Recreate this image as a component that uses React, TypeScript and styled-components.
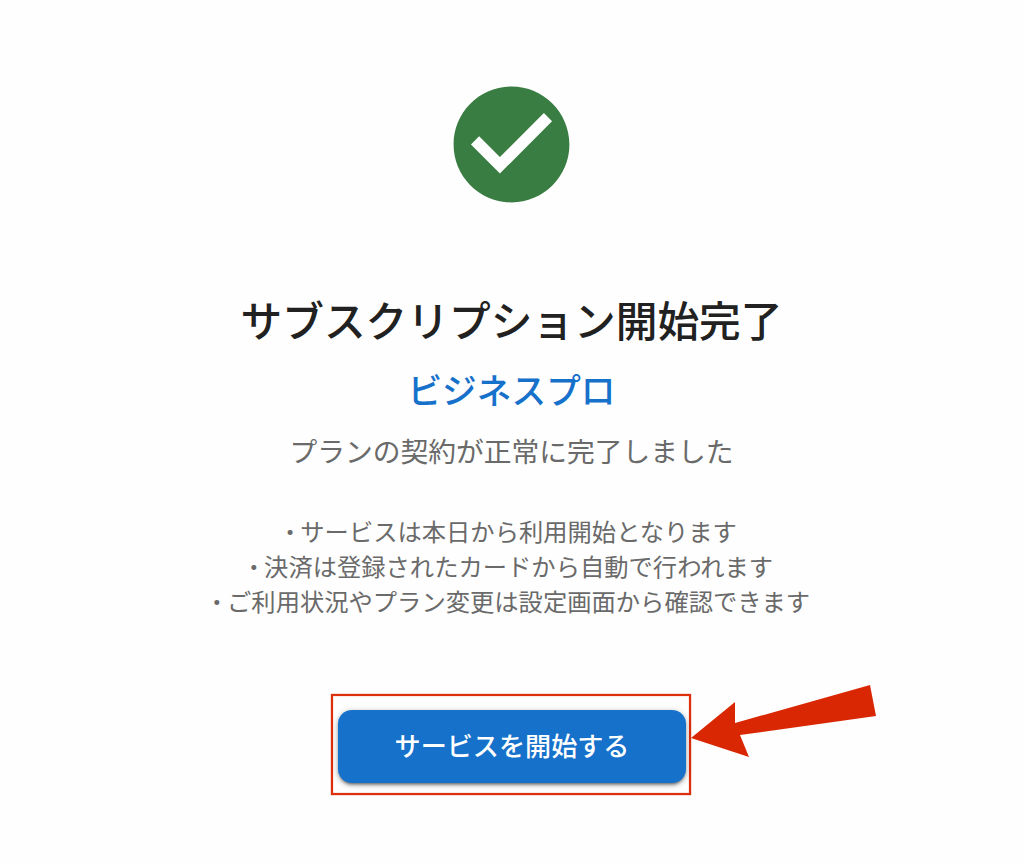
import styled, { createGlobalStyle } from 'styled-components'

const GlobalStyle = createGlobalStyle`
  * {
    box-sizing: border-box;
  }

  body {
    margin: 0;
    background-color: #fefefe;
    font-family: Roboto, 'Noto Sans CJK JP', sans-serif;
  }
`

const Container = styled.main`
  display: flex;
  flex-direction: column;
  align-items: center;
  min-height: 865px;
  padding-top: 75px;
  padding-right: 1px;
  text-align: center;
`

const CheckIcon = styled.svg`
  width: 139px;
  height: 139px;
  fill: #397d43;
`

const Title = styled.h1`
  margin: 81px 0 0;
  font-size: 41.7px;
  font-weight: 500;
  line-height: 56px;
  color: #212121;
`

const PlanName = styled.h2`
  margin: 13px 0 0;
  font-size: 34.7px;
  font-weight: 500;
  line-height: 56px;
  color: #1671cb;
`

const Message = styled.p`
  margin: 12px 0 0;
  font-size: 27.75px;
  line-height: 42px;
  color: #6a6a6a;
`

const Notes = styled.ul`
  margin: 42px 0 0;
  padding: 0;
  list-style: none;
  font-size: 24.3px;
  line-height: 34.8px;
  color: #6a6a6a;
`

const Highlight = styled.div`
  position: relative;
  width: 360px;
  height: 101px;
  margin-top: 74px;
  margin-right: 1px;
  padding: 14px 3px 0 5px;
  border: 2px solid #dc2f0c;
  box-shadow: 0 0 1px #dc2f0c, inset 0 0 1px #dc2f0c;
`

const StartBtn = styled.button`
  display: block;
  width: 348px;
  height: 73px;
  padding: 0 0 4px;
  border: none;
  border-radius: 14px;
  background-color: #1671cb;
  box-shadow: 0 3px 3px -2px rgba(0, 0, 0, 0.4), 0 2px 4px rgba(0, 0, 0, 0.3),
    0 1px 9px rgba(0, 0, 0, 0.12);
  font-family: inherit;
  font-size: 26.1px;
  font-weight: 500;
  color: #fff;
`

const Arrow = styled.svg`
  position: absolute;
  top: -12px;
  left: 357px;
  width: 188px;
  height: 76px;
  fill: #da2703;
`

const notes = [
  'サービスは本日から利用開始となります',
  '決済は登録されたカードから自動で行われます',
  'ご利用状況やプラン変更は設定画面から確認できます',
]

function App() {
  return (
    <>
      <GlobalStyle />
      <Container>
        <CheckIcon viewBox="0 0 24 24">
          <path d="M12 2C6.48 2 2 6.48 2 12s4.48 10 10 10 10-4.48 10-10S17.52 2 12 2zm-2 15l-5-5 1.41-1.41L10 14.17l7.59-7.59L19 8l-9 9z" />
        </CheckIcon>
        <Title>サブスクリプション開始完了</Title>
        <PlanName>ビジネスプロ</PlanName>
        <Message>プランの契約が正常に完了しました</Message>
        <Notes>
          {notes.map((note) => (
            <li key={note}>• {note}</li>
          ))}
        </Notes>
        <Highlight>
          <StartBtn>サービスを開始する</StartBtn>
          <Arrow viewBox="0 0 188 76">
            <path d="M1 54L45 18V39L180 1L186 32L50 51L59 73Z" />
          </Arrow>
        </Highlight>
      </Container>
    </>
  )
}

export default App
